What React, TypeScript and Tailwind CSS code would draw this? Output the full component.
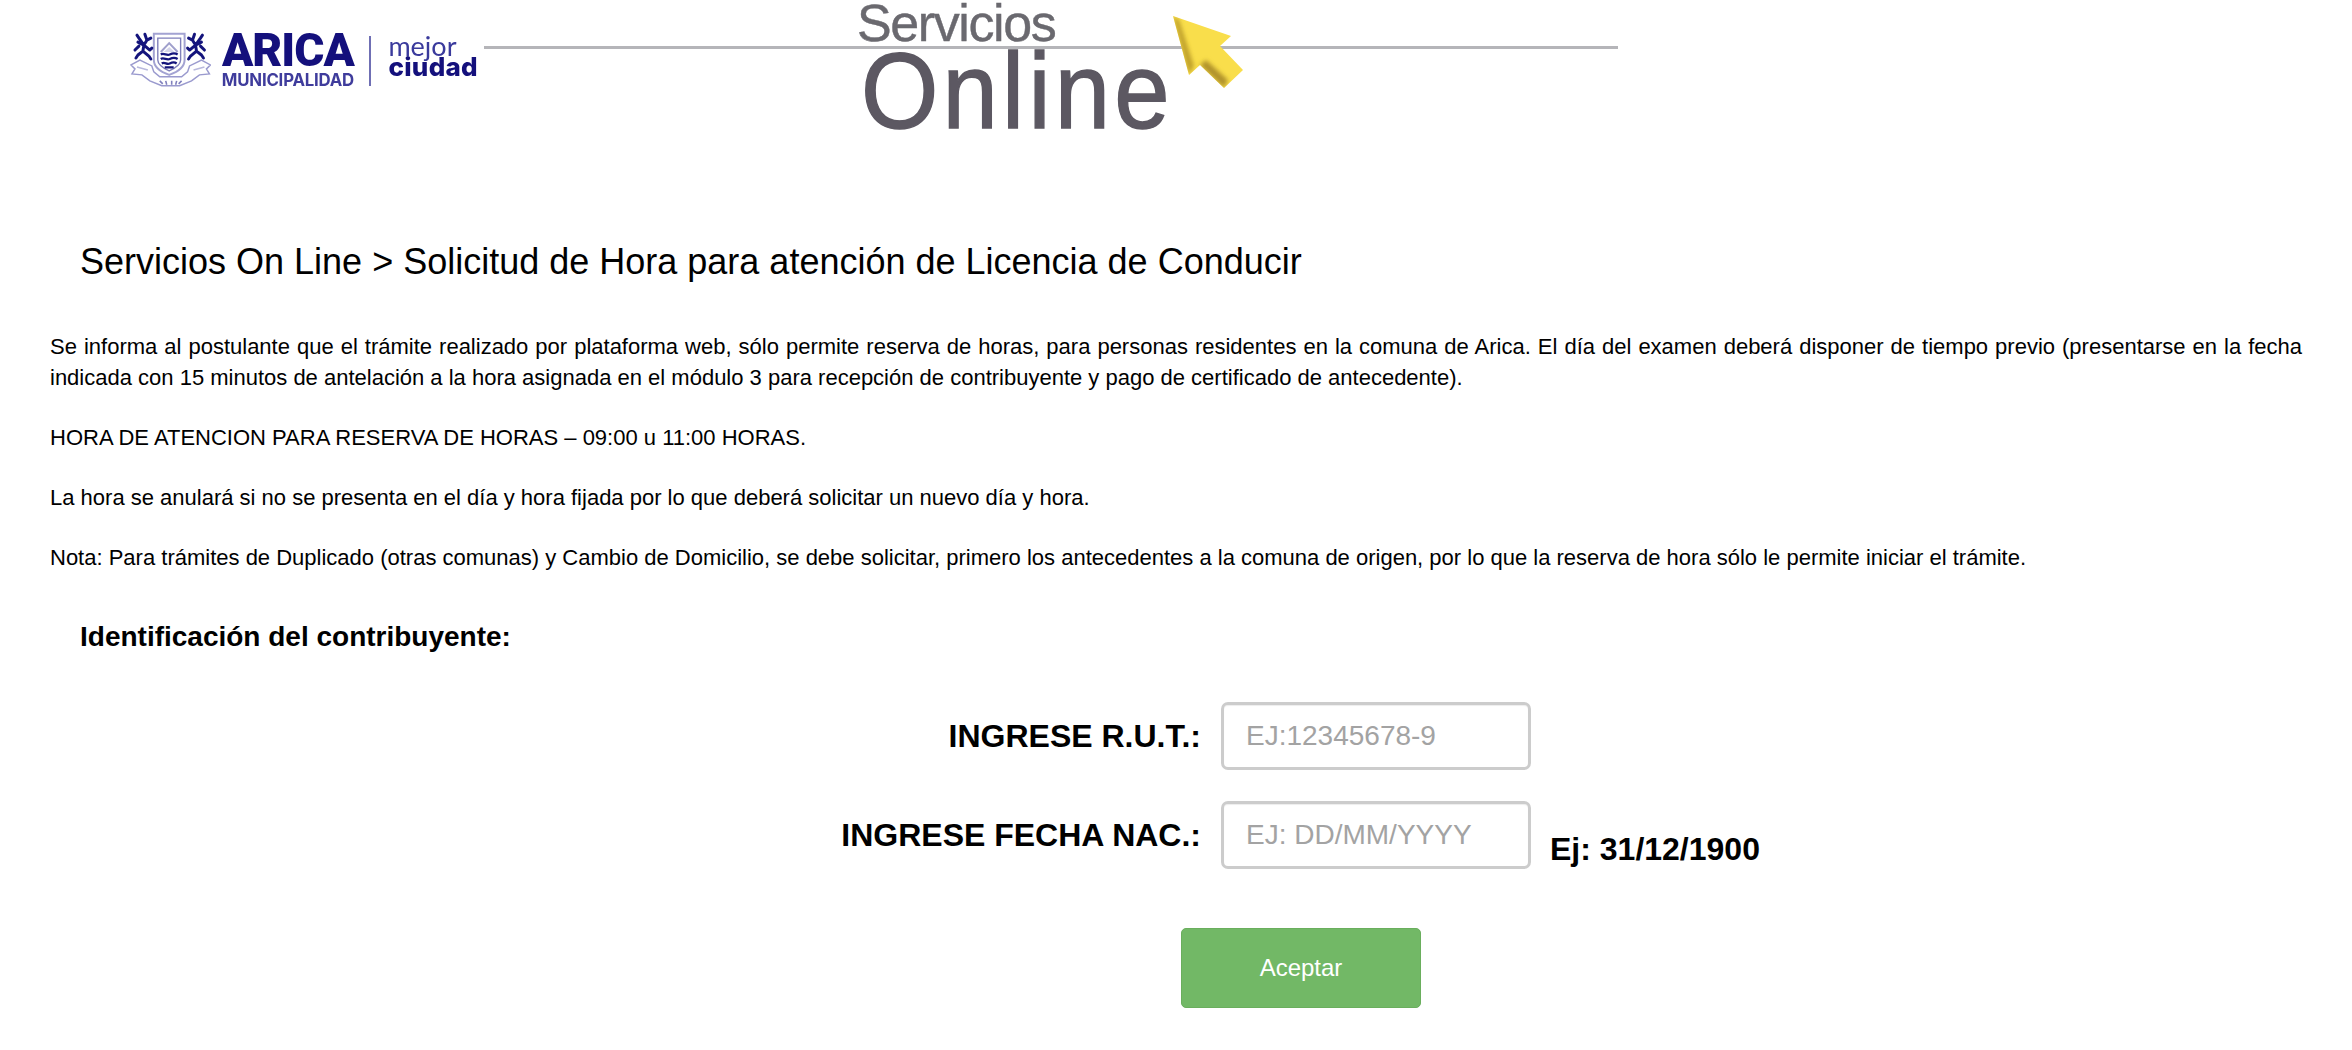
function Crest() {
  return (
    <svg width="82" height="56" viewBox="0 0 82 56" className="blur-[0.5px]" fill="none">
      {/* ribbon wings and laurel */}
      <path d="M1 34L10 29L22 35L24 41L30 46H52L58 41L60 35L72 29L81 34L77 38L80 43L70 44L62 50L50 55H32L20 50L12 44L2 43L5 38Z" fill="#fff" stroke="#9a9ace" strokeWidth="1.5" />
      <path d="M7 36L18 39M75 36L64 39" stroke="#b9b9dd" strokeWidth="1.5" />
      <path d="M30 50L33 53M36 50L37 54M42 50V54M47 50L46 54M52 50L49 53" stroke="#8080bd" strokeWidth="1.6" />
      {/* shield */}
      <path d="M24 2.5H55V29C55 37 48 41 39.5 44C31 41 24 37 24 29Z" fill="#fff" stroke="#a3a3d2" strokeWidth="2" />
      <path d="M28 7H51V29C51 34 46 37 39.5 40C33 37 28 34 28 29Z" stroke="#7f7fba" strokeWidth="1.4" />
      <path d="M31 21L39.5 12L48 21" stroke="#a0a0cc" strokeWidth="2" />
      <path d="M34 21L39.5 16L45 21Z" fill="#d5d5ea" />
      <path d="M31 23.5C34 21.5 37 25 40 23.5S45 21.5 48 23.5M31 28C34 26 37 29.5 40 28S45 26 48 28M32 32.5C35 30.5 37 34 40 32.5S45 31 47 32.5M35 36.5H44" stroke="#14147c" strokeWidth="2.3" />
      {/* lions */}
      <path d="M15 3L17 9L14 14L9 7L7 4M17 9L21 7M14 14L8 11M14 14L20 19L22 17M14 14L13 20L8 24L6 27M13 20L19 25L21 28M9 15L5 19" stroke="#14147c" strokeWidth="3" strokeLinecap="round" strokeLinejoin="round" />
      <path d="M65 3L63 9L66 14L71 7L73 4M63 9L59 7M66 14L72 11M66 14L60 19L58 17M66 14L67 20L72 24L74 27M67 20L61 25L59 28M71 15L75 19" stroke="#14147c" strokeWidth="3" strokeLinecap="round" strokeLinejoin="round" />
    </svg>
  );
}

function Logo() {
  return (
    <div className="flex w-[348px] items-start pt-[31px]">
      <Crest />
      <div className="ml-[10px] flex w-[134px] flex-col items-center text-[#14107c] blur-[0.3px]">
        <span className="font-['Roboto',sans-serif] text-[46px] leading-[39px] font-black tracking-[-1px]">ARICA</span>
        <span className="mt-[3px] font-['Inter',sans-serif] text-[16.8px] leading-[15px] font-bold tracking-[-0.2px] text-[#3f3c9c]">MUNICIPALIDAD</span>
      </div>
      <div className="mt-[5px] mr-[17px] ml-[15px] h-[50px] w-[2px] bg-[#6f6fb4]" />
      <div className="flex flex-col blur-[0.3px]">
        <span className="mt-[6px] font-['Lato',sans-serif] text-[27px] leading-[18px] font-normal text-[#3a3a9c]">mejor</span>
        <span className="font-['Inter',sans-serif] text-[26px] leading-[24px] font-extrabold tracking-[0.3px] text-[#14107c]">ciudad</span>
      </div>
    </div>
  );
}

function Paragraph({ children }: { children: React.ReactNode }) {
  return <p className="mb-[29px] text-justify">{children}</p>;
}

function Field({ label, placeholder, children }: { label: string; placeholder: string; children?: React.ReactNode }) {
  return (
    <div className="flex items-center">
      <label className="w-[1201px] text-right text-[32px] leading-[40px] font-bold">{label}</label>
      <input
        placeholder={placeholder}
        className="ml-[20px] h-[68px] w-[310px] rounded-[7px] border-[3px] border-[#ccc] px-[22px] text-[28px] shadow-[inset_0_1px_1px_rgba(0,0,0,0.075)] placeholder:text-[#a3a3a3]"
      />
      {children}
    </div>
  );
}

export default function App() {
  return (
    <div className="h-[1050px] w-[2352px] overflow-hidden bg-white font-['Liberation_Sans',Arial,sans-serif] text-black">
      <header className="relative flex h-[140px] items-start">
        <div className="ml-[130px]">
          <Logo />
        </div>
        <div className="mt-[46px] ml-[6px] h-[3px] w-[1134px] bg-[#b5b5b9]" />
        <div className="absolute top-0 left-[857px] flex flex-col">
          <span className="text-[52px] leading-[46px] tracking-[-1.4px] text-[#6a696f] [-webkit-text-stroke:0.4px_#6a696f]">Servicios</span>
          <span className="mt-[3px] ml-[4px] origin-left scale-x-[0.93] text-[107px] leading-[84px] tracking-[4.5px] text-[#5c5862] [-webkit-text-stroke:1.4px_#5c5862]">Online</span>
        </div>
        <svg className="absolute top-[14px] left-[1170px]" width="78" height="78" viewBox="0 0 78 78">
          <defs>
            <clipPath id="arrow">
              <polygon points="3,2 61,22 50,32 73,56 54,74 30,51 19,61" />
            </clipPath>
            <filter id="soft">
              <feGaussianBlur stdDeviation="2" />
            </filter>
          </defs>
          <polygon points="3,2 61,22 50,32 73,56 54,74 30,51 19,61" fill="#f9de4b" />
          <g clipPath="url(#arrow)" filter="url(#soft)">
            <polygon points="3,2 19,61 24,52 9,6" fill="#bfa02c" />
            <polygon points="30,51 54,74 58,66 36,46" fill="#b0922a" />
          </g>
        </svg>
      </header>

      <main>
        <h1 className="mt-[101px] ml-[80px] text-[36px] leading-[42px] font-normal">
          Servicios On Line &gt; Solicitud de Hora para atención de Licencia de Conducir
        </h1>
        <div className="mt-[48px] ml-[50px] w-[2252px] text-[22px] leading-[31px]">
          <Paragraph>
            Se informa al postulante que el trámite realizado por plataforma web, sólo permite reserva de horas, para personas residentes en la comuna de Arica. El día del examen deberá disponer de tiempo previo (presentarse en la fecha indicada con 15 minutos de antelación a la hora asignada en el módulo 3 para recepción de contribuyente y pago de certificado de antecedente).
          </Paragraph>
          <Paragraph>HORA DE ATENCION PARA RESERVA DE HORAS – 09:00 u 11:00 HORAS.</Paragraph>
          <Paragraph>La hora se anulará si no se presenta en el día y hora fijada por lo que deberá solicitar un nuevo día y hora.</Paragraph>
          <Paragraph>Nota: Para trámites de Duplicado (otras comunas) y Cambio de Domicilio, se debe solicitar, primero los antecedentes a la comuna de origen, por lo que la reserva de hora sólo le permite iniciar el trámite.</Paragraph>
        </div>
        <h2 className="mt-[48px] ml-[80px] text-[28px] leading-[32px] font-bold">Identificación del contribuyente:</h2>
        <form className="mt-[49px]">
          <div className="flex flex-col gap-[30px]">
            <Field label="INGRESE R.U.T.:" placeholder="EJ:12345678-9" />
            <Field label="INGRESE FECHA NAC.:" placeholder="EJ: DD/MM/YYYY">
              <span className="mt-[29px] ml-[19px] text-[32px] leading-[40px] font-bold">Ej: 31/12/1900</span>
            </Field>
          </div>
          <div className="mt-[59px] ml-[1181px]">
            <button
              type="button"
              className="h-[80px] w-[240px] rounded-[5px] border border-[#6aae5d] bg-[#72b866] text-[24px] text-white"
            >
              Aceptar
            </button>
          </div>
        </form>
      </main>
    </div>
  );
}
